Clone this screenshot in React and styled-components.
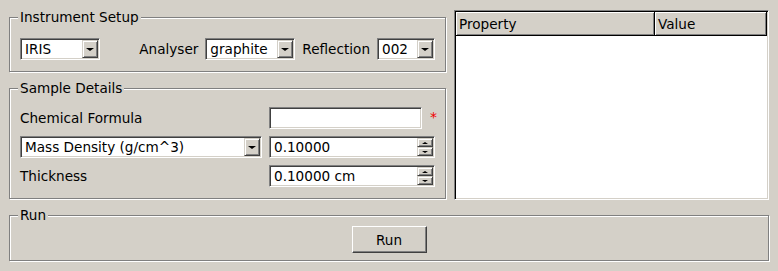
import styled, { createGlobalStyle } from "styled-components";

const GlobalStyle = createGlobalStyle`
  body {
    margin: 0;
    background: #d4d0c8;
    font-family: "DejaVu Sans", "Liberation Sans", sans-serif;
    font-size: 13.6px;
    color: #000;
  }
`

const Window = styled.div`
  width: 778px;
  height: 271px;
  box-sizing: border-box;
  padding: 10px 9px;
  display: flex;
  flex-direction: column;
  gap: 8px;
`
const TopRow = styled.div`
  display: flex;
  gap: 8px;
  height: 190px;
`
const LeftColumn = styled.div`
  width: 437px;
  display: flex;
  flex-direction: column;
  gap: 9px;
`
const GroupBox = styled.fieldset`
  margin: 0;
  min-width: 0;
  border: 1px solid #808080;
  box-shadow: inset 1px 1px 0 #fff, 1px 1px 0 #fff;
  padding: ${(props) => props.$pad};
  display: ${(props) => props.$grid ? "grid" : "flex"};
  grid-template-columns: 242px 166px;
  column-gap: 7px;
  row-gap: 7px;
  align-items: center;
  justify-content: ${(props) => props.$center ? "center" : "flex-start"};
`
const Legend = styled.legend`
  padding: 0 2px;
  margin-left: -2px;
  line-height: 15px;
  background: #d4d0c8;
`
const Label = styled.span`
  white-space: nowrap;
  margin-left: ${(props) => props.$push ? "auto" : "0"};
`
const Sunken = styled.div`
  box-sizing: border-box;
  flex-shrink: 0;
  width: ${(props) => props.$w}px;
  height: 22px;
  background: #fff;
  border: 1px solid;
  border-color: #808080 #fff #fff #808080;
  box-shadow: inset 1px 1px 0 #404040, inset -1px -1px 0 #d4d0c8;
  padding: 1px 1px 1px 4px;
  display: flex;
  align-items: center;
  white-space: nowrap;
`
const Text = styled.span`
  flex: 1;
  overflow: hidden;
`
const ArrowButton = styled.div`
  box-sizing: border-box;
  width: 16px;
  height: 18px;
  background: #d4d0c8;
  border: 1px solid;
  border-color: #d4d0c8 #404040 #404040 #d4d0c8;
  box-shadow: inset 1px 1px 0 #fff, inset -1px -1px 0 #808080;
  display: flex;
  align-items: center;
  justify-content: center;
`
const SpinStack = styled.div`
  display: flex;
  flex-direction: column;
`
const SpinButton = styled(ArrowButton)`
  height: 9px;
`
const Triangle = styled.span`
  width: 0;
  height: 0;
  border-left: ${(props) => props.$s}px solid transparent;
  border-right: ${(props) => props.$s}px solid transparent;
  ${(props) => props.$up ? "border-bottom" : "border-top"}: ${(props) => props.$s - 1}px solid #000;
`
const FieldCell = styled.div`
  display: flex;
  align-items: center;
`
const Required = styled.span`
  color: #f00000;
  margin-left: 8px;
  margin-top: -3px;
  font-size: 14px;
`
const Table = styled.div`
  flex: 1;
  box-sizing: border-box;
  background: #fff;
  border: 1px solid;
  border-color: #808080 #fff #fff #808080;
  box-shadow: inset 1px 1px 0 #000, inset -1px -1px 0 #d4d0c8;
  padding: 1px;
`
const HeaderRow = styled.div`
  display: flex;
  height: 24px;
`
const HeaderCell = styled.div`
  box-sizing: border-box;
  width: ${(props) => props.$w ? props.$w + "px" : "auto"};
  flex: ${(props) => props.$w ? "none" : "1"};
  background: #d4d0c8;
  border-right: 1px solid #000;
  border-bottom: 1px solid #000;
  box-shadow: inset 1px 1px 0 #fff, inset -1px -1px 0 #808080;
  padding-left: 3px;
  display: flex;
  align-items: center;
`
const Button = styled.button`
  width: 75px;
  height: 27px;
  font: inherit;
  color: #000;
  background: #d4d0c8;
  border: 1px solid;
  border-color: #fff #404040 #404040 #fff;
  box-shadow: inset -1px -1px 0 #808080;
  padding: 0;
`

const Combo = ({ w, value }) => (
  <Sunken $w={w}>
    <Text>{value}</Text>
    <ArrowButton><Triangle $s={4} /></ArrowButton>
  </Sunken>
)

const Spin = ({ value }) => (
  <Sunken $w={166}>
    <Text>{value}</Text>
    <SpinStack>
      <SpinButton><Triangle $s={3} $up /></SpinButton>
      <SpinButton><Triangle $s={3} /></SpinButton>
    </SpinStack>
  </Sunken>
)

const App = () => {
  return (
    <Window>
      <GlobalStyle />
      <TopRow>
        <LeftColumn>
          <GroupBox $pad="13px 10px 11px">
            <Legend>Instrument Setup</Legend>
            <Combo w={80} value="IRIS" />
            <Label $push>Analyser</Label>
            <Combo w={90} value="graphite" />
            <Label>Reflection</Label>
            <Combo w={58} value="002" />
          </GroupBox>
          <GroupBox $grid $pad="11px 10px 11px">
            <Legend>Sample Details</Legend>
            <Label>Chemical Formula</Label>
            <FieldCell>
              <Sunken $w={153} />
              <Required>*</Required>
            </FieldCell>
            <Combo w={242} value="Mass Density (g/cm^3)" />
            <Spin value="0.10000" />
            <Label>Thickness</Label>
            <Spin value="0.10000 cm" />
          </GroupBox>
        </LeftColumn>
        <Table>
          <HeaderRow>
            <HeaderCell $w={199}>Property</HeaderCell>
            <HeaderCell>Value</HeaderCell>
          </HeaderRow>
        </Table>
      </TopRow>
      <GroupBox $center $pad="3px 10px 7px">
        <Legend>Run</Legend>
        <Button>Run</Button>
      </GroupBox>
    </Window>
  );
}

export default App;
